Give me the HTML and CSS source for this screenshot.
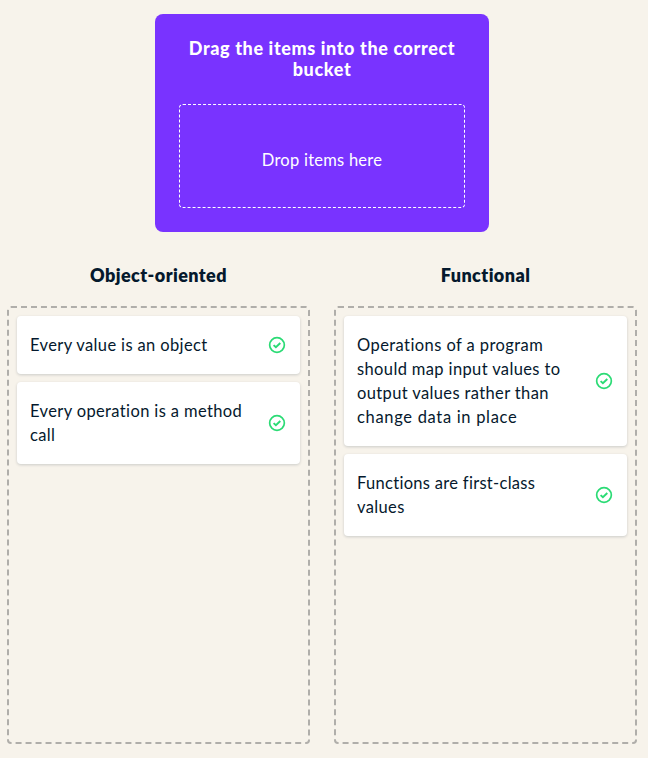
FILE: index.html
```html
<!DOCTYPE html>
<html lang="en">
<head>
<meta charset="utf-8">
<title>Drag and drop exercise</title>
<link rel="stylesheet" href="styles.css">
</head>
<body>
<svg class="defs" width="0" height="0" aria-hidden="true"><symbol id="check" viewBox="0 0 18 18"><circle cx="9" cy="9" r="7.35" fill="none" stroke="currentColor" stroke-width="1.7"/><path d="M5.6 9.1l2.3 2.2 4.4-4.3" fill="none" stroke="currentColor" stroke-width="1.9"/></symbol></svg>
<main class="exercise">
  <section class="source">
    <h1 class="source-title">Drag the items into the correct<br>bucket</h1>
    <div class="dropzone">Drop items here</div>
  </section>
  <div class="buckets">
    <section class="bucket">
      <h2 class="bucket-title">Object-oriented</h2>
      <div class="bucket-body">
        <div class="card"><p>Every value is an object</p><svg class="icon"><use href="#check"/></svg></div>
        <div class="card"><p>Every operation is a method<br>call</p><svg class="icon"><use href="#check"/></svg></div>
      </div>
    </section>
    <section class="bucket">
      <h2 class="bucket-title">Functional</h2>
      <div class="bucket-body">
        <div class="card"><p><span class="loose">Operations of a program</span><br>should map input values to<br>output values rather than<br><span class="looser">change data in place</span></p><svg class="icon"><use href="#check"/></svg></div>
        <div class="card"><p><span class="tight">Functions are first-class</span><br>values</p><svg class="icon"><use href="#check"/></svg></div>
      </div>
    </section>
  </div>
</main>
</body>
</html>
```
FILE: styles.css
```css
* { box-sizing: border-box; }
body {
  margin: 0;
  background: #f7f3eb;
  color: #05192d;
  font: 16.5px/24px Lato, "Liberation Sans", sans-serif;
}
h1, h2, p { margin: 0; }
.defs { display: block; height: 0; }
.exercise {
  display: flex;
  flex-direction: column;
  height: 758px;
  padding: 14px 11px 14px 7px;
}
.source {
  width: 334px;
  height: 218px;
  margin-left: 148px;
  padding: 24px;
  border-radius: 8px;
  background: #7933ff;
  color: #fff;
  text-align: center;
}
.source-title {
  height: 66px;
  font-size: 18px;
  font-weight: 900;
  line-height: 21px;
  letter-spacing: .62px;
  white-space: nowrap;
}
.dropzone {
  display: flex;
  align-items: center;
  justify-content: center;
  height: 104px;
  padding-top: 8px;
  border: 1px dashed #fff;
  border-radius: 4px;
  letter-spacing: .25px;
}
.buckets {
  display: grid;
  grid-template-columns: 303px 303px;
  gap: 24px;
  flex: 1;
  padding-top: 32px;
}
.bucket { display: flex; flex-direction: column; }
.bucket-title {
  height: 42px;
  font-size: 18px;
  font-weight: 800;
  line-height: 23px;
  letter-spacing: .42px;
  text-align: center;
}
.bucket-body {
  display: flex;
  flex: 1;
  flex-direction: column;
  gap: 8px;
  padding: 8px;
  border: 2px dashed #b0aeaa;
  border-radius: 4px;
}
.card {
  display: flex;
  align-items: center;
  justify-content: space-between;
  padding: 17px 14px 17px 13px;
  border-radius: 4px;
  background: #fff;
  box-shadow: 0 1px 3px rgba(5, 25, 45, .18);
  letter-spacing: .37px;
  white-space: nowrap;
}
.loose { letter-spacing: .42px; }
.looser { letter-spacing: .68px; }
.tight { letter-spacing: .3px; }
.icon {
  flex: none;
  width: 18px;
  height: 18px;
  color: #2bdb75;
}
```
